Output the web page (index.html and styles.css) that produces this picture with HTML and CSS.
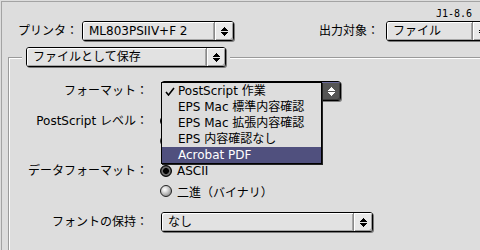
FILE: index.html
```html
<!DOCTYPE html>
<html lang="ja">
<head>
<meta charset="utf-8">
<title>プリント</title>
<link rel="stylesheet" href="styles.css">
</head>
<body>
<div class="window">
  <div class="version">J1-8.6</div>
  <div class="top-row">
    <span class="top-label">プリンタ：</span>
    <div class="popup w-printer">
      <span class="pop-text">ML803PSIIV+F 2</span>
      <span class="pop-arrow"><svg width="7" height="9" viewBox="0 0 7 9" shape-rendering="crispEdges"><path d="M3 0h1v1H3zM2 1h3v1H2zM1 2h5v1H1zM0 3h7v1H0zM0 5h7v1H0zM1 6h5v1H1zM2 7h3v1H2zM3 8h1v1H3z"/></svg></span>
    </div>
    <span class="top-label out-label">出力対象：</span>
    <div class="popup w-output">
      <span class="pop-text">ファイル</span>
      <span class="pop-arrow"><svg width="7" height="9" viewBox="0 0 7 9" shape-rendering="crispEdges"><path d="M3 0h1v1H3zM2 1h3v1H2zM1 2h5v1H1zM0 3h7v1H0zM0 5h7v1H0zM1 6h5v1H1zM2 7h3v1H2zM3 8h1v1H3z"/></svg></span>
    </div>
  </div>

  <div class="group">
    <div class="group-title">
      <div class="popup w-title">
        <span class="pop-text">ファイルとして保存</span>
        <span class="pop-arrow"><svg width="7" height="9" viewBox="0 0 7 9" shape-rendering="crispEdges"><path d="M3 0h1v1H3zM2 1h3v1H2zM1 2h5v1H1zM0 3h7v1H0zM0 5h7v1H0zM1 6h5v1H1zM2 7h3v1H2zM3 8h1v1H3z"/></svg></span>
      </div>
    </div>

    <div class="field f-format">
      <span class="label">フォーマット：</span>
      <div class="popup w-format">
        <span class="pop-text"><span class="covered">PostScript 作業</span></span>
        <span class="pop-arrow active"><svg width="7" height="9" viewBox="0 0 7 9" shape-rendering="crispEdges"><path d="M3 0h1v1H3zM2 1h3v1H2zM1 2h5v1H1zM0 3h7v1H0zM0 5h7v1H0zM1 6h5v1H1zM2 7h3v1H2zM3 8h1v1H3z"/></svg></span>
        <ul class="menu">
          <li class="item"><svg class="check" width="10" height="9" viewBox="0 0 10 9"><path d="M1 5l2.5 3L9 1" fill="none" stroke="#000" stroke-width="1.6"/></svg>PostScript 作業</li>
          <li class="item">EPS Mac 標準内容確認</li>
          <li class="item">EPS Mac 拡張内容確認</li>
          <li class="item">EPS 内容確認なし</li>
          <li class="item selected">Acrobat PDF</li>
        </ul>
      </div>
    </div>

    <div class="field f-level">
      <span class="label">PostScript レベル：</span>
      <div class="options">
        <div class="option"><span class="radio on"></span><span class="covered">レベル 1 互換</span></div>
        <div class="option"><span class="radio"></span><span class="covered">レベル 2 と 3</span></div>
      </div>
    </div>

    <div class="field f-data">
      <span class="label">データフォーマット：</span>
      <div class="options">
        <div class="option"><span class="radio on"></span>ASCII</div>
        <div class="option"><span class="radio"></span>二進（バイナリ）</div>
      </div>
    </div>

    <div class="field f-font">
      <span class="label">フォントの保持：</span>
      <div class="popup w-font">
        <span class="pop-text">なし</span>
        <span class="pop-arrow"><svg width="7" height="9" viewBox="0 0 7 9" shape-rendering="crispEdges"><path d="M3 0h1v1H3zM2 1h3v1H2zM1 2h5v1H1zM0 3h7v1H0zM0 5h7v1H0zM1 6h5v1H1zM2 7h3v1H2zM3 8h1v1H3z"/></svg></span>
      </div>
    </div>
  </div>
</div>
</body>
</html>
```

FILE: styles.css
```css
html, body {
  margin: 0;
  padding: 0;
  background: #dddddd;
}

body {
  font-family: "DejaVu Sans", "Noto Sans CJK JP", sans-serif;
  font-size: 12px;
  color: #000;
}

.window {
  width: 479px;
  height: 249px;
  margin: 1px 0 0 1px;
  box-sizing: border-box;
  border-top: 1px solid #a3a3a3;
  border-left: 1px solid #a3a3a3;
  background: #dddddd;
  overflow: hidden;
}

.version {
  margin-top: 6px;
  height: 12px;
  line-height: 12px;
  padding-right: 8px;
  text-align: right;
  font-family: "DejaVu Sans Mono", monospace;
  font-size: 10px;
}

.top-row {
  display: flex;
  align-items: center;
  margin-top: 1px;
  padding-left: 16px;
  height: 20px;
  white-space: nowrap;
}

.top-label {
  width: 64px;
  flex: none;
  line-height: 20px;
}

.out-label {
  margin-left: 85px;
  width: 67px;
}

/* popup menu button */
.popup {
  position: relative;
  display: flex;
  flex: none;
  height: 20px;
  box-sizing: border-box;
  border: 1px solid #000;
  border-radius: 3px;
  background: #e2e2e2;
  box-shadow: 1px 1px 0 #7a7a7a;
  white-space: nowrap;
}

.pop-text {
  flex: 1;
  padding-left: 6px;
  line-height: 18px;
  border-radius: 2px 0 0 2px;
  box-shadow: inset 1px 1px 0 #ffffff, inset -1px -1px 0 #a6a6a6;
  overflow: hidden;
}

.pop-arrow {
  width: 18px;
  flex: none;
  display: flex;
  align-items: center;
  justify-content: center;
  border-left: 1px solid #8a8a8a;
  border-radius: 0 2px 2px 0;
  background: #e8e8e8;
  box-shadow: inset 1px 1px 0 #ffffff, inset -1px -1px 0 #9a9a9a;
}

.pop-arrow svg {
  fill: #000;
}

.pop-arrow.active {
  background: #555555;
  border-left-color: #6a6a9a;
  box-shadow: inset 1px 1px 0 #6a6a9a, inset -1px -1px 0 #3a3a3a;
}

.pop-arrow.active svg {
  fill: #ffffff;
}

.w-printer { width: 152px; }
.w-output  { width: 106px; }
.w-title   { width: 200px; }
.w-format  { width: 180px; }
.w-font    { width: 212px; }

/* text hidden under the open menu */
.covered {
  visibility: hidden;
}

/* group box */
.group {
  margin: 16px 0 0 6px;
  height: 300px;
  border-top: 1px solid #9a9a9a;
  border-left: 1px solid #9a9a9a;
  box-shadow: inset 1px 1px 0 #ffffff;
}

.group-title {
  display: flex;
  width: fit-content;
  margin: -11px 0 0 13px;
  padding: 0 4px;
  background: #dddddd;
}

.field {
  display: flex;
  align-items: flex-start;
}

.label {
  width: 139px;
  flex: none;
  margin-right: 12px;
  text-align: right;
  line-height: 20px;
  white-space: nowrap;
}

.field .popup {
  margin-left: 1px;
}

.f-format { margin-top: 14px; }
.f-level  { margin-top: 10px; }
.f-data   { margin-top: 10px; }
.f-font   { margin-top: 11px; }

.options {
  display: flex;
  flex-direction: column;
}

.option {
  display: flex;
  align-items: center;
  height: 20px;
  white-space: nowrap;
}

.radio {
  width: 12px;
  height: 12px;
  box-sizing: border-box;
  margin-right: 5px;
  border-radius: 50%;
  border: 1px solid #222;
  background: radial-gradient(circle at 38% 35%, #ffffff 0, #e6e6e6 2px, #b4b4b4 5px, #8c8c8c 7px);
}

.radio.on {
  border-color: #000;
  background: radial-gradient(circle at 50% 50%, #000 0, #000 2.6px, #5a5a5a 3.2px, #7a7a7a 4px, #2a2a2a 5px);
}

/* open menu */
.menu {
  position: absolute;
  top: 0;
  left: -1px;
  z-index: 5;
  width: 161px;
  margin: 0;
  padding: 0;
  list-style: none;
  box-sizing: border-box;
  border: 1px solid #000;
  background: #dddddd;
  box-shadow: 1px 1px 0 #222;
}

.item {
  position: relative;
  height: 16px;
  line-height: 16px;
  padding-left: 16px;
  white-space: nowrap;
}

.item.selected {
  background: #50507e;
  color: #ffffff;
}

.check {
  position: absolute;
  left: 3px;
  top: 4px;
}
```
